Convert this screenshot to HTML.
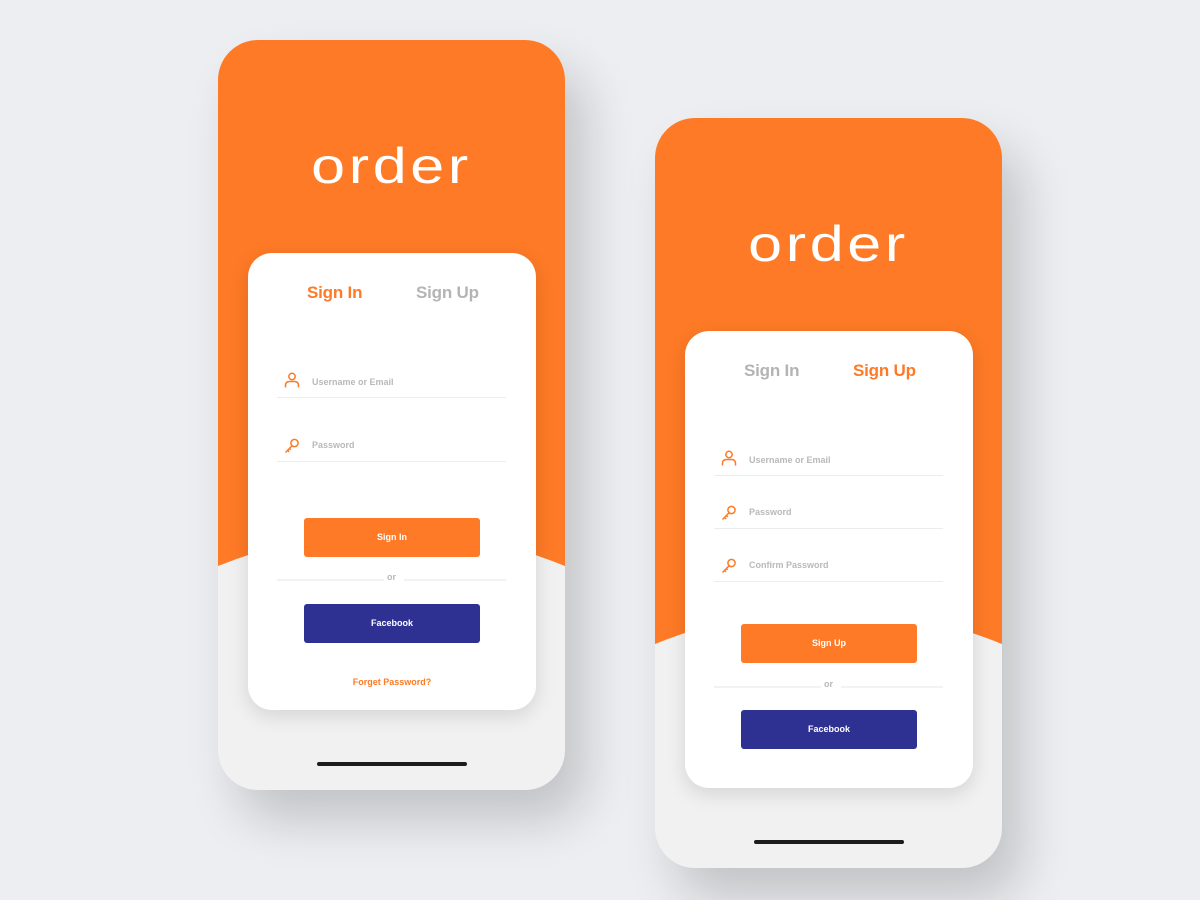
<!DOCTYPE html>
<html><head><meta charset="utf-8"><style>
*{margin:0;padding:0;box-sizing:border-box}
body{width:1200px;height:900px;background:#eceef1;position:relative;overflow:hidden;font-family:"Liberation Sans",sans-serif}
.ph{position:absolute;width:347px;height:750px;border-radius:40px;overflow:hidden;background:#f1f1f2;box-shadow:20px 30px 50px rgba(0,0,0,.18)}
.ph svg.bg{position:absolute;left:0;top:0}
.logo{position:absolute;left:0;width:347px;text-align:center;color:#fff;font-size:50px;letter-spacing:3px;font-weight:normal;transform:scaleX(1.22)}
.card{position:absolute;left:30px;width:288px;height:457px;background:#fff;border-radius:24px;box-shadow:0 6px 20px rgba(0,0,0,.12)}
.tab{position:absolute;font-size:17px;font-weight:bold;top:30px;letter-spacing:-0.2px}
.on{color:#fe7a26}.off{color:#b4b4b4}
.inp{position:absolute;left:29px;width:229px;height:1px;background:#ececec}
.lbl{position:absolute;left:64px;font-size:9px;font-weight:bold;color:#b9b9b9}
.ic{position:absolute;left:36px}
.btn{position:absolute;left:56px;width:176px;height:39px;border-radius:3px;color:#fff;font-size:9px;font-weight:bold;text-align:center;line-height:39px}
.or{position:absolute;left:29px;width:229px;height:2px;}
.or:before{content:"";position:absolute;left:0;width:107px;top:0;height:2px;background:#f2f2f2}
.or:after{content:"";position:absolute;right:0;width:102px;top:0;height:2px;background:#f2f2f2}
.or span{position:absolute;left:0;width:229px;text-align:center;top:-7px;font-size:9px;color:#b9b9b9;font-weight:bold}
.bar{position:absolute;left:99px;width:150px;height:4px;border-radius:2px;background:#1c1c1c}
</style></head><body>

<div class="ph" style="left:218px;top:40px">
<svg class="bg" width="347" height="750"><path d="M0 0H347V526Q174 456 0 526Z" fill="#fe7a26"/></svg>
<div class="logo" style="top:97px">order</div>
<div class="card" style="top:213px">
 <div class="tab on" style="left:59px">Sign In</div>
 <div class="tab off" style="left:168px">Sign Up</div>
 <svg class="ic" style="top:119px" width="16" height="16" viewBox="0 0 16 16"><circle cx="8" cy="4.5" r="3.2" fill="none" stroke="#fe7a26" stroke-width="1.5"/><path d="M1.5 15.5V13.5Q1.5 9.5 5.5 9.5H10.5Q14.5 9.5 14.5 13.5V15.5" fill="none" stroke="#fe7a26" stroke-width="1.5"/></svg>
 <div class="lbl" style="top:124px">Username or Email</div>
 <div class="inp" style="top:144px"></div>
 <svg class="ic" style="top:185px" width="16" height="16" viewBox="0 0 16 16"><circle cx="10.5" cy="5" r="3.6" fill="none" stroke="#fe7a26" stroke-width="1.5"/><path d="M8 7.8L1.5 14.5M3.5 12.3l1.6 1.6M5.3 10.5l1.4 1.4" fill="none" stroke="#fe7a26" stroke-width="1.5"/></svg>
 <div class="lbl" style="top:187px">Password</div>
 <div class="inp" style="top:208px"></div>
 <div class="btn" style="top:265px;background:#fe7a26">Sign In</div>
 <div class="or" style="top:326px"><span>or</span></div>
 <div class="btn" style="top:351px;background:#2e3192">Facebook</div>
 <div style="position:absolute;left:0;width:288px;text-align:center;top:424px;font-size:9px;font-weight:bold;color:#fe7a26">Forget Password?</div>
</div>
<div class="bar" style="top:722px"></div>
</div>

<div class="ph" style="left:655px;top:118px">
<svg class="bg" width="347" height="750"><path d="M0 0H347V526Q174 456 0 526Z" fill="#fe7a26"/></svg>
<div class="logo" style="top:97px">order</div>
<div class="card" style="top:213px">
 <div class="tab off" style="left:59px">Sign In</div>
 <div class="tab on" style="left:168px">Sign Up</div>
 <svg class="ic" style="top:119px" width="16" height="16" viewBox="0 0 16 16"><circle cx="8" cy="4.5" r="3.2" fill="none" stroke="#fe7a26" stroke-width="1.5"/><path d="M1.5 15.5V13.5Q1.5 9.5 5.5 9.5H10.5Q14.5 9.5 14.5 13.5V15.5" fill="none" stroke="#fe7a26" stroke-width="1.5"/></svg>
 <div class="lbl" style="top:124px">Username or Email</div>
 <div class="inp" style="top:144px"></div>
 <svg class="ic" style="top:174px" width="16" height="16" viewBox="0 0 16 16"><circle cx="10.5" cy="5" r="3.6" fill="none" stroke="#fe7a26" stroke-width="1.5"/><path d="M8 7.8L1.5 14.5M3.5 12.3l1.6 1.6M5.3 10.5l1.4 1.4" fill="none" stroke="#fe7a26" stroke-width="1.5"/></svg>
 <div class="lbl" style="top:176px">Password</div>
 <div class="inp" style="top:197px"></div>
 <svg class="ic" style="top:227px" width="16" height="16" viewBox="0 0 16 16"><circle cx="10.5" cy="5" r="3.6" fill="none" stroke="#fe7a26" stroke-width="1.5"/><path d="M8 7.8L1.5 14.5M3.5 12.3l1.6 1.6M5.3 10.5l1.4 1.4" fill="none" stroke="#fe7a26" stroke-width="1.5"/></svg>
 <div class="lbl" style="top:229px">Confirm Password</div>
 <div class="inp" style="top:250px"></div>
 <div class="btn" style="top:293px;background:#fe7a26">Sign Up</div>
 <div class="or" style="top:355px"><span>or</span></div>
 <div class="btn" style="top:379px;background:#2e3192">Facebook</div>
</div>
<div class="bar" style="top:722px"></div>
</div>

</body></html>
